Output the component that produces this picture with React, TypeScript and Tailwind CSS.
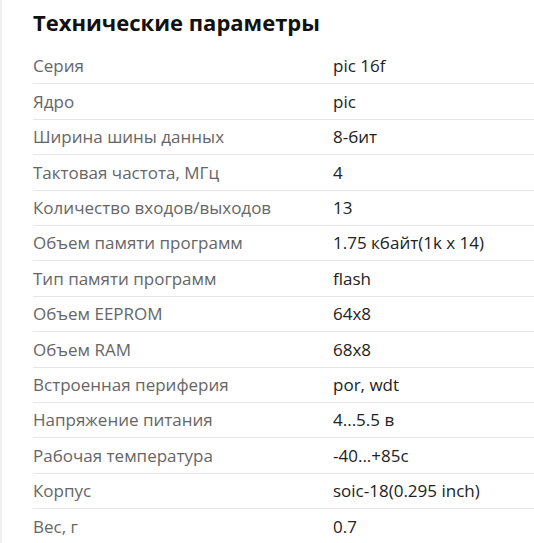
const specs: [string, string][] = [
  ['Серия', 'pic 16f'],
  ['Ядро', 'pic'],
  ['Ширина шины данных', '8-бит'],
  ['Тактовая частота, МГц', '4'],
  ['Количество входов/выходов', '13'],
  ['Объем памяти программ', '1.75 кбайт(1k x 14)'],
  ['Тип памяти программ', 'flash'],
  ['Объем EEPROM', '64x8'],
  ['Объем RAM', '68x8'],
  ['Встроенная периферия', 'por, wdt'],
  ['Напряжение питания', '4...5.5 в'],
  ['Рабочая температура', '-40...+85c'],
  ['Корпус', 'soic-18(0.295 inch)'],
  ['Вес, г', '0.7'],
];

export default function App() {
  return (
    <div className="flex h-[543px] overflow-hidden bg-white font-['Open_Sans',sans-serif]">
      {/* left edge strip */}
      <div className="w-[2px] shrink-0 bg-[#efefef]" />

      <div className="flex-1 pl-[31px]">
        <h2 className="pt-[6px] text-[22px] font-bold leading-[32px] text-[#111]">Технические параметры</h2>

        <div className="mt-[11px]">
          {specs.map(([name, value]) => (
            <div key={name} className="flex h-[35.4px] items-center border-b border-[#e6e6e6] text-[17px]">
              <span className="w-[300px] shrink-0 text-[#666]">{name}</span>
              <span className="text-[#222]">{value}</span>
            </div>
          ))}
        </div>
      </div>
    </div>
  );
}
